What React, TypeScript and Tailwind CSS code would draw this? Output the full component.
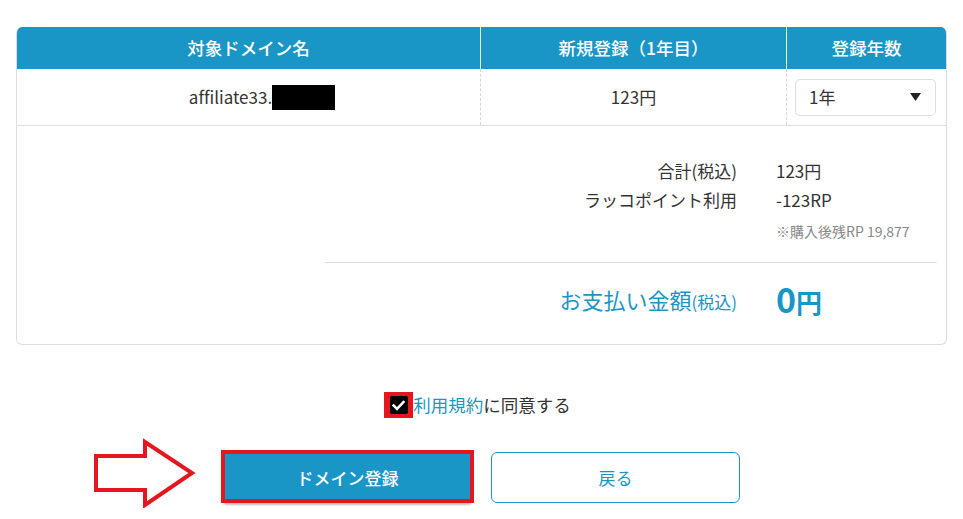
import React from "react";

const font = { fontFamily: '"Noto Sans CJK JP", "Noto Sans", sans-serif' };

export default function App() {
  return (
    <div className="relative w-[963px] h-[519px] bg-white text-[#333]" style={font}>
      <div className="pt-[27px] px-[16px]">
        <div className="w-[931px] border-x border-b border-[#dddddd] rounded-[6px] overflow-hidden">
          {/* header */}
          <div className="flex h-[42px] bg-[#1a96c6] text-white text-[17.5px] font-medium">
            <div className="w-[464px] flex items-center justify-center border-r border-[#e6f3f9]">対象ドメイン名</div>
            <div className="w-[306px] flex items-center justify-center border-r border-[#e6f3f9]">新規登録（1年目）</div>
            <div className="flex-1 flex items-center justify-center">登録年数</div>
          </div>
          {/* body row */}
          <div className="flex h-[57px] border-b border-[#dddddd] text-[17px]">
            <div className="w-[464px] flex items-center justify-center border-r border-dashed border-[#d6d6d6]">
              <span className="inline-block w-[27px]"></span>
              <span className="[font-variant-ligatures:none]">affiliate33.</span>
              <span className="inline-block w-[63px] h-[25px] bg-black"></span>
            </div>
            <div className="w-[306px] flex items-center justify-center border-r border-dashed border-[#d6d6d6]">123円</div>
            <div className="flex-1 flex items-center pl-[8px]">
              <div className="w-[141px] h-[37px] border border-[#dddddd] rounded-[5px] flex items-center justify-between pl-[13px] pr-[14px]">
                <span>1年</span>
                <svg width="11" height="8" viewBox="0 0 11 8"><polygon points="0,0 11,0 5.5,8" fill="#222" /></svg>
              </div>
            </div>
          </div>
          {/* summary */}
          <div className="pl-[308px] pr-[9px] pt-[30px] pb-[25px]">
            <div className="flex h-[29px] items-center text-[17px]">
              <div className="w-[412px] text-right">合計(税込)</div>
              <div className="pl-[39px]">123円</div>
            </div>
            <div className="flex h-[29px] items-center text-[17px]">
              <div className="w-[412px] text-right">ラッコポイント利用</div>
              <div className="pl-[39px]">-123RP</div>
            </div>
            <div className="flex h-[20px] mt-[7px] items-center text-[14px] text-[#888]">
              <div className="w-[412px]"></div>
              <div className="pl-[39px]">※購入後残RP 19,877</div>
            </div>
            <div className="mt-[21px] border-t border-[#dddddd]"></div>
            <div className="flex h-[40px] mt-[16px] items-center text-[#1a96c6]">
              <div className="w-[412px] text-right text-[22px] leading-none">
                お支払い金額<span className="text-[17px]">(税込)</span>
              </div>
              <div className="pl-[39px] font-bold flex items-baseline">
                <span className="text-[34px] leading-none">0</span>
                <span className="text-[26px] leading-none">円</span>
              </div>
            </div>
          </div>
        </div>
      </div>

      {/* agree */}
      <div className="flex justify-center mt-[47px] pr-[8px]">
        <div className="flex items-center h-[26px]">
          <div className="relative w-[29px] h-[26px] bg-[#e5161e] flex items-center justify-center">
            <div className="w-[18px] h-[18px] bg-black rounded-[2px] flex items-center justify-center">
              <svg width="13" height="11" viewBox="0 0 13 11">
                <path d="M1.5 5.5 L5 9 L11.5 2" stroke="white" strokeWidth="2.6" fill="none" strokeLinecap="square" />
              </svg>
            </div>
          </div>
          <span className="text-[17.5px] text-[#1a96c6]">利用規約</span>
          <span className="text-[17.5px] text-[#333]">に同意する</span>
        </div>
      </div>

      {/* buttons */}
      <div className="flex justify-center gap-[19px] mt-[34px]">
        <div className="relative">
          <button className="w-[249px] h-[51px] bg-[#1a96c6] text-white text-[17px] font-medium rounded-[4px] shadow-[0_2px_2px_rgba(0,0,0,0.25)]">
            ドメイン登録
          </button>
          <div className="absolute -left-[2px] -top-[2px] w-[253px] h-[53px] border-[4px] border-[#e5161e] pointer-events-none"></div>
        </div>
        <button className="w-[249px] h-[51px] bg-white text-[#1a96c6] text-[17px] border border-[#1a96c6] rounded-[6px]">
          戻る
        </button>
      </div>

      {/* arrow annotation */}
      <svg className="absolute left-[92px] top-[438px]" width="106" height="70" viewBox="92 438 106 70">
        <polygon
          points="96,456 145,456 145,442 192,473 145,505 145,490 96,490"
          fill="white"
          stroke="#e5161e"
          strokeWidth="4"
          strokeLinejoin="miter"
        />
      </svg>
    </div>
  );
}
